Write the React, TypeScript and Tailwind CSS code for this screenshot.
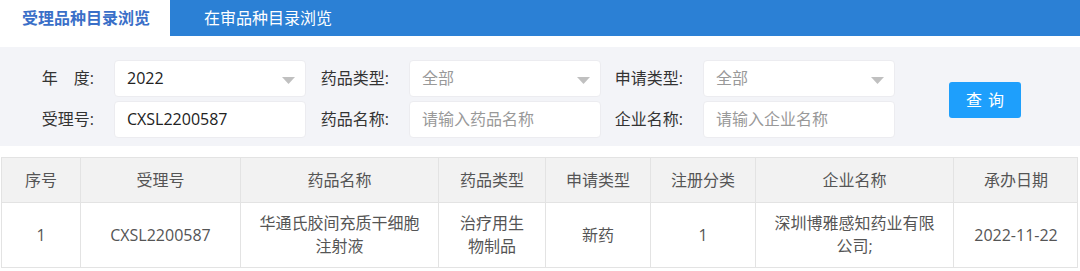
import React from "react";

const font = { fontFamily: '"Open Sans", "Noto Sans CJK SC", sans-serif' };

function Arrow() {
  return (
    <svg width="13" height="7" viewBox="0 0 13 7" className="absolute right-[10px] top-[16px]">
      <path d="M0 0 L13 0 L6.5 7 Z" fill="#c0c0c0" />
    </svg>
  );
}

function Field({ value, placeholder, select }: { value?: string; placeholder?: string; select?: boolean }) {
  return (
    <div className="relative w-[192px] h-[37px] bg-white rounded-[4px] border border-[#ececf0] flex items-center pl-[12px] text-[16px]">
      {value ? (
        <span className="text-[#222]">{value}</span>
      ) : (
        <span className="text-[#999]">{placeholder}</span>
      )}
      {select && <Arrow />}
    </div>
  );
}

function Label({ text, w }: { text: string; w: string }) {
  return (
    <div className={`${w} shrink-0 text-right pr-[20px] text-[16px] text-[#333]`}>{text}</div>
  );
}

const cols = ["w-[79px]", "w-[160px]", "w-[198px]", "w-[107px]", "w-[105px]", "w-[105px]", "w-[198px]", "w-[124px]"];
const heads = ["序号", "受理号", "药品名称", "药品类型", "申请类型", "注册分类", "企业名称", "承办日期"];
const row = ["1", "CXSL2200587", "华通氏胶间充质干细胞注射液", "治疗用生物制品", "新药", "1", "深圳博雅感知药业有限公司;", "2022-11-22"];

export default function App() {
  return (
    <div className="w-[1080px] h-[271px] bg-white overflow-hidden" style={font}>
      <div className="flex h-[36px] bg-[#2b80d5]">
        <div className="w-[170px] bg-white flex items-center pl-[22px] text-[16px] font-bold text-[#3a6fc8]">受理品种目录浏览</div>
        <div className="flex items-center pl-[34px] text-[16px] text-white">在审品种目录浏览</div>
      </div>
      <div className="mt-[11px] h-[99px] bg-[#f3f4f8] flex items-center">
        <div className="flex flex-col gap-[4px] pt-[4px]">
          <div className="flex items-center">
            <Label text={"年\u3000度:"} w="w-[114px]" />
            <Field value="2022" select />
            <Label text="药品类型:" w="w-[103px]" />
            <Field placeholder="全部" select />
            <Label text="申请类型:" w="w-[102px]" />
            <Field placeholder="全部" select />
          </div>
          <div className="flex items-center">
            <Label text="受理号:" w="w-[114px]" />
            <Field value="CXSL2200587" />
            <Label text="药品名称:" w="w-[103px]" />
            <Field placeholder="请输入药品名称" />
            <Label text="企业名称:" w="w-[102px]" />
            <Field placeholder="请输入企业名称" />
          </div>
        </div>
        <button className="ml-[54px] mt-[7px] w-[72px] h-[36px] bg-[#1e9ffc] rounded-[3px] text-white text-[16px] tracking-[6px] pl-[6px]">查询</button>
      </div>
      <div className="mt-[11px] ml-[1px] w-[1077px] border border-[#e3e3e3]">
        <div className="flex h-[45px] bg-[#f2f2f2] border-b border-[#e3e3e3]">
          {heads.map((h, i) => (
            <div key={i} className={`${cols[i]} shrink-0 flex items-center justify-center text-[16px] text-[#555] ${i < 7 ? "border-r border-[#e3e3e3]" : ""}`}>{h}</div>
          ))}
        </div>
        <div className="flex h-[64px]">
          {row.map((c, i) => (
            <div key={i} className={`${cols[i]} shrink-0 flex items-center justify-center text-center px-[15px] text-[16px] leading-[23px] text-[#555] ${i < 7 ? "border-r border-[#e3e3e3]" : ""}`}>{c}</div>
          ))}
        </div>
      </div>
    </div>
  );
}
